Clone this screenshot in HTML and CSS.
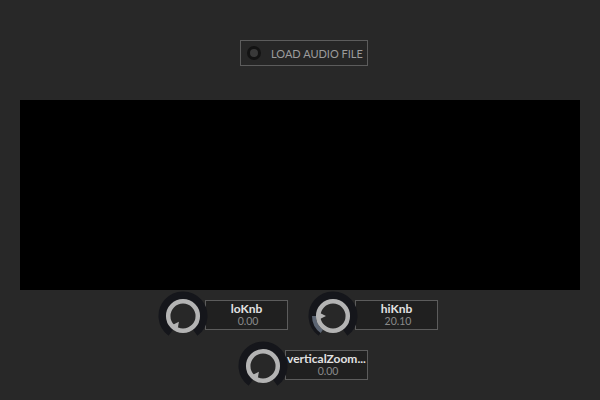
FILE: index.html
```html
<!DOCTYPE html>
<html>
<head>
<meta charset="utf-8">
<link rel="stylesheet" href="styles.css">
</head>
<body>
<div class="top">
  <button class="load-btn"><span class="led"></span><span class="load-label">LOAD AUDIO FILE</span></button>
</div>
<div class="display"></div>
<div class="knob-row row1">
  <div class="knob-group">
    <svg class="knob" width="50" height="50" viewBox="0 0 50 50">
      <path d="M12.95 41.58 A20.5 20.5 0 1 1 37.05 41.58" fill="none" stroke="#15161b" stroke-width="8"/>
      <circle cx="25" cy="25" r="14.8" fill="none" stroke="#b4b4b4" stroke-width="4.5"/>
      <path d="M14.93 33.75 L19.79 37.28 L20.89 30.66 Z" fill="#b4b4b4"/>
    </svg>
    <div class="label-box"><div class="name">loKnb</div><div class="value">0.00</div></div>
  </div>
  <div class="knob-group">
    <svg class="knob" width="50" height="50" viewBox="0 0 50 50">
      <path d="M12.95 41.58 A20.5 20.5 0 1 1 37.05 41.58" fill="none" stroke="#15161b" stroke-width="8"/>
      <path d="M13.83 40.37 A19 19 0 0 1 6 25" fill="none" stroke="#5c6573" stroke-width="4"/>
      <circle cx="25" cy="25" r="14.8" fill="none" stroke="#b4b4b4" stroke-width="4.5"/>
      <path d="M12 22 L12 28 L18 25 Z" fill="#b4b4b4"/>
    </svg>
    <div class="label-box"><div class="name">hiKnb</div><div class="value">20.10</div></div>
  </div>
</div>
<div class="knob-row row2">
  <div class="knob-group">
    <svg class="knob" width="50" height="50" viewBox="0 0 50 50">
      <path d="M12.95 41.58 A20.5 20.5 0 1 1 37.05 41.58" fill="none" stroke="#15161b" stroke-width="8"/>
      <circle cx="25" cy="25" r="14.8" fill="none" stroke="#b4b4b4" stroke-width="4.5"/>
      <path d="M14.93 33.75 L19.79 37.28 L20.89 30.66 Z" fill="#b4b4b4"/>
    </svg>
    <div class="label-box"><div class="name">verticalZoom...</div><div class="value">0.00</div></div>
  </div>
</div>
</body>
</html>
```
FILE: styles.css
```css
html, body {
  margin: 0;
  padding: 0;
}
body {
  width: 600px;
  height: 400px;
  background: #282828;
  font-family: "Lato", "Liberation Sans", sans-serif;
  overflow: hidden;
}
.top {
  padding-top: 40px;
  padding-left: 240px;
}
.load-btn {
  box-sizing: border-box;
  width: 128px;
  height: 26px;
  margin: 0;
  padding: 0 0 0 6px;
  display: flex;
  align-items: center;
  background: #262626;
  border: 1px solid #5c5c5c;
  font-family: inherit;
  cursor: pointer;
}
.led {
  box-sizing: border-box;
  width: 14px;
  height: 14px;
  border-radius: 50%;
  background: #393939;
  border: 3px solid #131313;
}
.load-label {
  margin-left: 10px;
  font-size: 11px;
  color: #9c9c9c;
}
.display {
  margin: 34px 20px 0 20px;
  height: 190px;
  background: #000;
}
.knob-row {
  display: flex;
  gap: 20px;
}
.row1 {
  margin-top: 1px;
  padding-left: 158px;
}
.row2 {
  padding-left: 238px;
}
.knob-group {
  display: flex;
  align-items: flex-start;
}
.knob {
  display: block;
  position: relative;
  z-index: 1;
}
.label-box {
  box-sizing: border-box;
  width: 83px;
  height: 30px;
  margin-top: 9px;
  margin-left: -3px;
  border: 1px solid #5c5c5c;
  background: #202020;
  text-align: center;
  padding-top: 1px;
}
.name {
  font-size: 12px;
  font-weight: bold;
  color: #e2e2e2;
  line-height: 13px;
  white-space: nowrap;
}
.value {
  font-size: 10.5px;
  color: #8a8a8a;
  line-height: 13px;
  padding-left: 3px;
}
```
